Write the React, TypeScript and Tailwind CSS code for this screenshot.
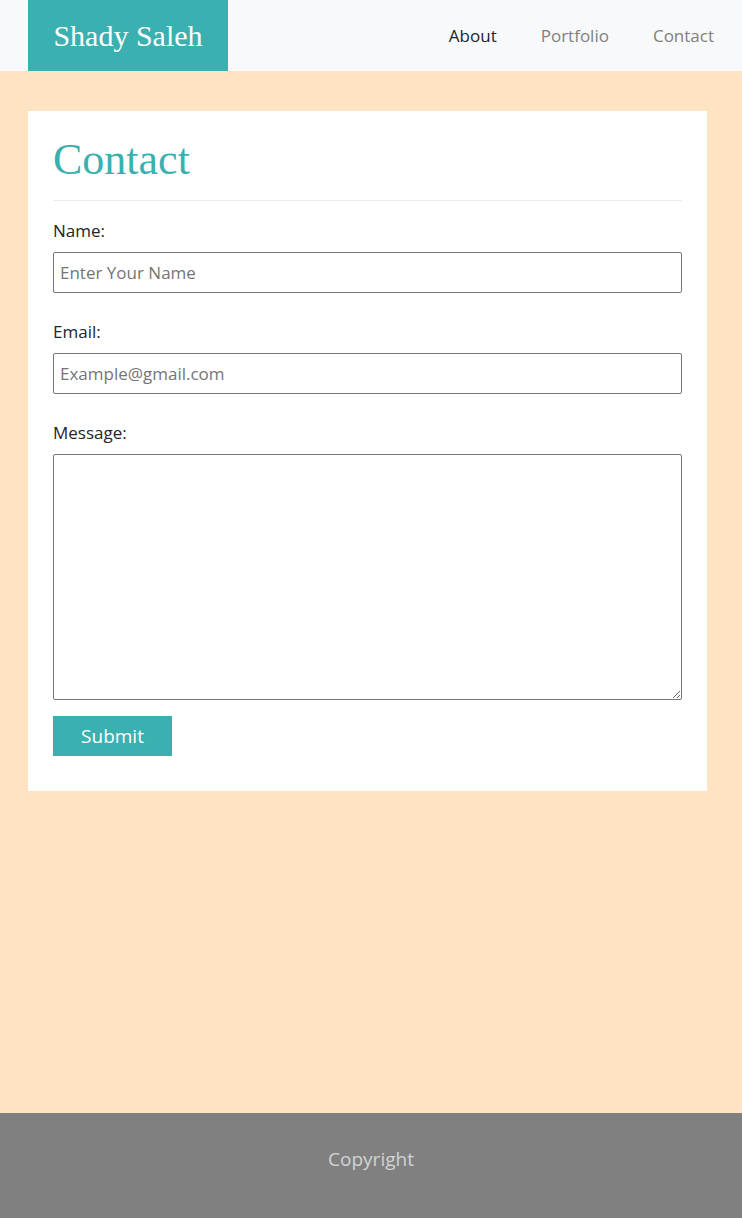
import React from "react";

const sans = "font-['Segoe_UI','Open_Sans',sans-serif]";
const serif = "font-['Georgia','Liberation_Serif',serif]";

function Field({ label, placeholder }: { label: string; placeholder: string }) {
  return (
    <div className="mb-[27px]">
      <label className="block text-[17px] leading-[24px] text-[#212529] mb-[9px]">{label}</label>
      <input
        type="text"
        placeholder={placeholder}
        className="block h-[41px] w-full border border-[#767676] rounded-[2px] px-[6px] text-[17px] text-[#212529] placeholder:text-[#757575] outline-none"
      />
    </div>
  );
}

export default function App() {
  return (
    <div className={`${sans} min-h-[1218px] flex flex-col`}>
      <header className="h-[71px] bg-[#f8f9fa] flex items-center justify-between pl-[28px] pr-[28px]">
        <div className={`${serif} h-[71px] w-[200px] bg-[#3bb0b0] flex items-center justify-center text-white text-[30px]`}>
          Shady Saleh
        </div>
        <nav className="flex items-center gap-[44px] text-[17px]">
          <a className="text-[#212529]">About</a>
          <a className="text-[#808080]">Portfolio</a>
          <a className="text-[#808080]">Contact</a>
        </nav>
      </header>

      <main className="bg-[#ffe4c4] h-[1042px] pl-[28px] pr-[35px] pt-[40px]">
        <div className="bg-white px-[25px] pt-[25px] pb-[35px]">
          <h1 className={`${serif} text-[44px] leading-[48px] text-[#3bb0b0]`}>Contact</h1>
          <hr className="mt-[16px] mb-[18px] border-[#e9ecef]" />
          <Field label="Name:" placeholder="Enter Your Name" />
          <Field label="Email:" placeholder="Example@gmail.com" />
          <div className="mb-[16px]">
            <label className="block text-[17px] leading-[24px] text-[#212529] mb-[9px]">Message:</label>
            <textarea className="block h-[246px] w-full border border-[#767676] rounded-[2px] px-[6px] text-[17px] outline-none" />
          </div>
          <button className="h-[40px] w-[119px] bg-[#3bb0b0] text-white text-[19px]">Submit</button>
        </div>
      </main>

      <footer className="h-[105px] bg-[#808080] flex items-center justify-center pb-[12px] text-[19px] text-[#d3d3d3]">
        Copyright
      </footer>
    </div>
  );
}
